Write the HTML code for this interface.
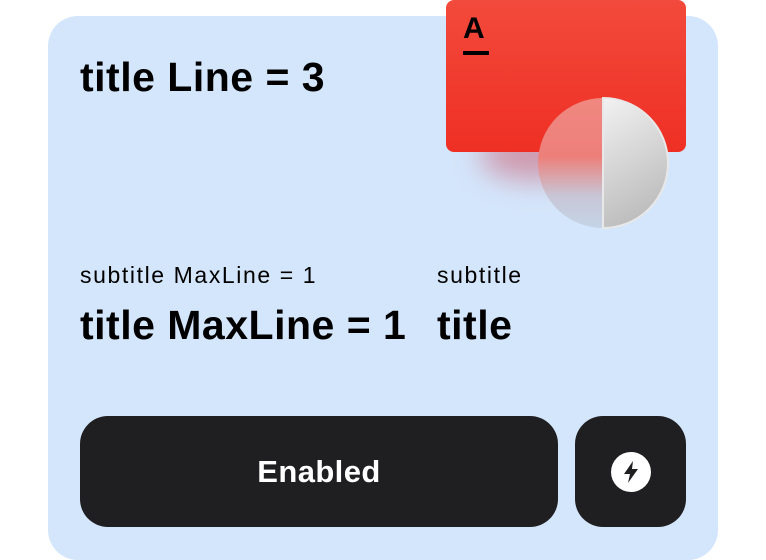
<!DOCTYPE html>
<html><head><style>
body{margin:0;width:766px;height:560px;background:#fff;position:relative;overflow:hidden;font-family:"Liberation Sans",sans-serif;}
.card{position:absolute;left:48px;top:16px;width:670px;height:544px;background:#d4e6fb;border-radius:30px;}
.t{position:absolute;color:#000;font-weight:bold;font-size:41px;white-space:nowrap;letter-spacing:0.5px}
.s{position:absolute;color:#000;font-size:23px;white-space:nowrap;letter-spacing:1.6px}
.red{position:absolute;left:446px;top:0;width:240px;height:152px;border-radius:8px;background:linear-gradient(#f24a3c,#ef2f24);}
.shadow{position:absolute;left:480px;top:130px;width:110px;height:50px;border-radius:50%;background:rgba(200,60,80,0.45);filter:blur(14px);}
.logo{position:absolute;left:463px;top:12px;font-weight:bold;font-size:30px;color:#000}
.logo:after{content:"";position:absolute;left:0;top:39px;width:26px;height:4px;background:#000}
.btn{position:absolute;top:416px;height:111px;background:#1f1f21;border-radius:28px;color:#fff;font-weight:bold;font-size:31px;letter-spacing:0.4px;display:flex;align-items:center;justify-content:center}
</style></head><body>
<div class="card"></div>
<div class="shadow"></div>
<div class="red"></div>
<div class="logo">A</div>
<svg style="position:absolute;left:536px;top:96px" width="134" height="134">
<defs><linearGradient id="g" x1="0" y1="0" x2="0.3" y2="1"><stop offset="0" stop-color="#f2f2f2"/><stop offset="1" stop-color="#bdbdbd"/></linearGradient>
<linearGradient id="h" x1="0" y1="0" x2="0" y2="1"><stop offset="0" stop-color="#f08880"/><stop offset="0.45" stop-color="#ed7f7a"/><stop offset="0.75" stop-color="#c8c6d6"/><stop offset="1" stop-color="#c4d4e6"/></linearGradient></defs>
<path d="M67 2 A65 65 0 0 0 67 132 Z" fill="url(#h)"/>
<path d="M67 2 A65 65 0 0 1 67 132 Z" fill="url(#g)" stroke="#e8e8e8" stroke-width="2"/>
</svg>
<div class="t" style="left:80px;top:54px">title Line = 3</div>
<div class="s" style="left:80px;top:262px">subtitle MaxLine = 1</div>
<div class="s" style="left:437px;top:262px">subtitle</div>
<div class="t" style="left:80px;top:302px">title MaxLine = 1</div>
<div class="t" style="left:437px;top:302px">title</div>
<div class="btn" style="left:80px;width:478px">Enabled</div>
<div class="btn" style="left:575px;width:111px">
<svg width="40" height="40" viewBox="0 0 40 40"><circle cx="20" cy="20" r="20" fill="#fff"/><path d="M22 9 L13 22 H19 L17 31 L27 17 H21 Z" fill="#1f1f21"/></svg>
</div>
</body></html>
